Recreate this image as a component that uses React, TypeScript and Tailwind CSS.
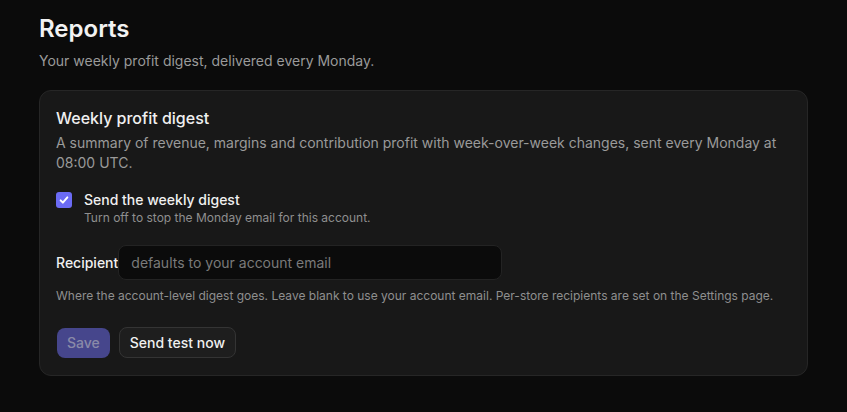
import React from "react";

export default function App() {
  return (
    <div
      className="min-h-screen bg-[#0b0b0b] px-[39px] pt-[13px] text-white"
      style={{ fontFamily: "Inter, 'Noto Sans', sans-serif" }}
    >
      <h1 className="text-2xl font-semibold leading-8 text-[#f2f2f2]">Reports</h1>
      <p className="mt-[6px] text-sm leading-5 text-[#9a9a9a]">
        Your weekly profit digest, delivered every Monday.
      </p>

      <div className="mt-[19px] rounded-xl border border-[#262626] bg-[#181818] px-4 pb-[17px] pt-[15px]">
        <h2 className="text-base font-medium leading-6 text-[#f0f0f0]">Weekly profit digest</h2>
        <p className="mt-[3px] text-sm leading-5 text-[#9a9a9a]">
          A summary of revenue, margins and contribution profit with week-over-week changes, sent every Monday at
          08:00 UTC.
        </p>

        <div className="mt-[17px] flex items-start gap-3">
          <div className="mt-[2px] flex h-4 w-4 items-center justify-center rounded-[3px] bg-[#6b6bf5]">
            <svg viewBox="0 0 16 16" className="h-3 w-3" fill="none" stroke="white" strokeWidth="2.6" strokeLinecap="round" strokeLinejoin="round">
              <path d="M3.5 8.5l3 3 6-7" />
            </svg>
          </div>
          <div>
            <div className="text-sm font-medium leading-5 text-[#f0f0f0]">Send the weekly digest</div>
            <div className="text-xs leading-4 text-[#8f8f8f]">Turn off to stop the Monday email for this account.</div>
          </div>
        </div>

        <div className="mt-[19px] flex items-center">
          <label className="text-sm font-medium leading-5 text-[#f0f0f0]">Recipient</label>
          <input
            className="h-[35px] w-96 rounded-lg border border-[#232323] bg-[#0b0b0b] px-3 text-sm text-[#ddd] outline-none placeholder:text-[#7a7a7a]"
            placeholder="defaults to your account email"
            style={{ fontFamily: "Inter, 'Noto Sans', sans-serif" }}
          />
        </div>
        <p className="mt-2 text-xs leading-4 text-[#8f8f8f]">
          Where the account-level digest goes. Leave blank to use your account email. Per-store recipients are set on the Settings page.
        </p>

        <div className="ml-px mt-[23px] flex items-center gap-[9px]">
          <button className="h-[30px] rounded-lg bg-[#46468c] px-2.5 text-sm font-medium text-[#8a8aa8]">Save</button>
          <button className="h-[31px] rounded-lg border border-[#343434] bg-[#1e1e1e] px-2.5 text-sm font-medium text-[#f0f0f0]">
            Send test now
          </button>
        </div>
      </div>
    </div>
  );
}
